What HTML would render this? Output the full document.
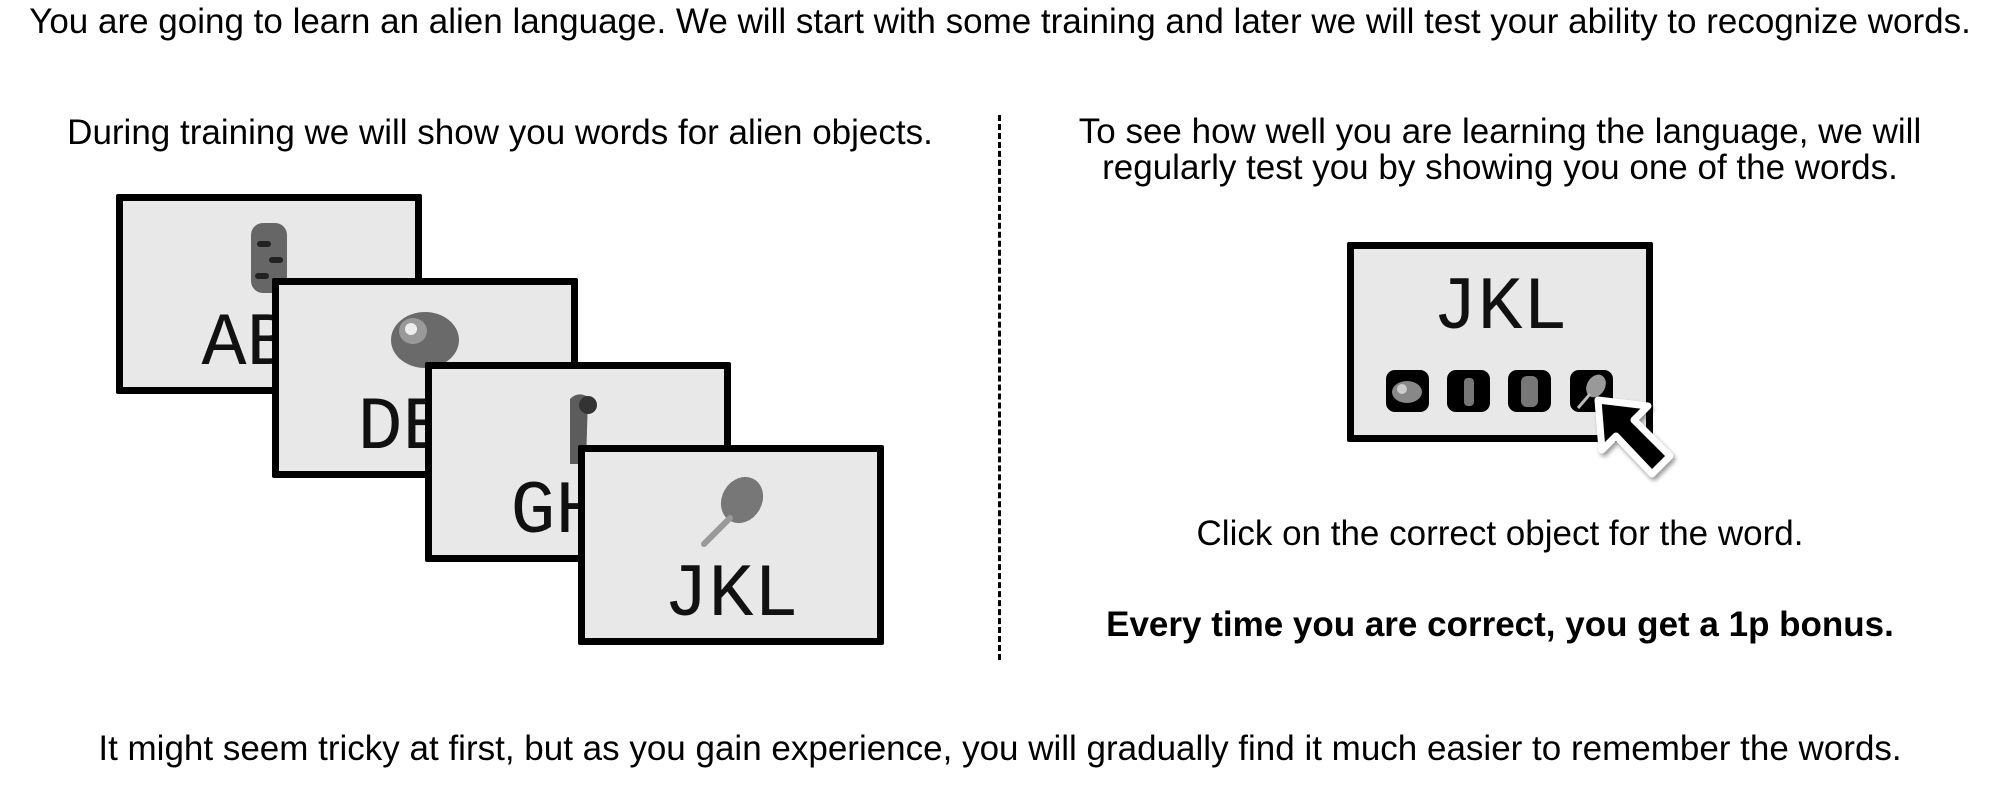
<!DOCTYPE html>
<html><head><meta charset="utf-8"><style>
html,body{margin:0;padding:0;background:#fff;}
body{width:2000px;height:800px;position:relative;overflow:hidden;font-family:"Liberation Sans",Arial,sans-serif;color:#000;}
.t{position:absolute;font-size:35px;white-space:nowrap;transform:translate(-50%,-50%);line-height:36px;text-align:center;}
.card{position:absolute;width:292px;height:186px;border:7px solid #000;background:#e8e8e8;border-radius:2px;}
.card .w{position:absolute;left:0;right:0;top:104px;text-align:center;font-family:"Liberation Mono",monospace;font-size:75px;line-height:80px;color:#111;}
.card .o{position:absolute;left:50%;top:20px;transform:translateX(-50%);}
.ic{position:absolute;top:370px;width:43px;height:42px;background:#000;border-radius:9px;}
</style></head><body>
<div class="t" style="left:1000px;top:22px;">You are going to learn an alien language. We will start with some training and later we will test your ability to recognize words.</div>
<div class="t" style="left:500px;top:133px;">During training we will show you words for alien objects.</div>
<div class="t" style="left:1500px;top:150px;">To see how well you are learning the language, we will<br>regularly test you by showing you one of the words.</div>

<div class="card" style="left:116px;top:194px;">
 <svg class="o" width="60" height="75" viewBox="0 0 60 75"><rect x="12" y="2" width="36" height="70" rx="12" fill="#666"/><rect x="18" y="20" width="14" height="6" rx="3" fill="#222"/><rect x="30" y="36" width="14" height="6" rx="3" fill="#222"/><rect x="16" y="52" width="14" height="6" rx="3" fill="#222"/></svg>
 <div class="w">ABC</div></div>
<div class="card" style="left:272px;top:278px;">
 <svg class="o" width="80" height="70" viewBox="0 0 80 70"><ellipse cx="40" cy="35" rx="34" ry="28" fill="#6a6a6a"/><ellipse cx="28" cy="26" rx="14" ry="13" fill="#999"/><circle cx="26" cy="24" r="6" fill="#eee"/></svg>
 <div class="w">DEF</div></div>
<div class="card" style="left:425px;top:362px;">
 <svg class="o" width="60" height="80" viewBox="0 0 60 80"><path d="M22 10 Q30 2 40 8 L38 75 L22 75 Z" fill="#5c5c5c"/><circle cx="40" cy="16" r="9" fill="#333"/></svg>
 <div class="w">GHI</div></div>
<div class="card" style="left:578px;top:445px;">
 <svg class="o" width="70" height="78" viewBox="0 0 70 78"><ellipse cx="46" cy="28" rx="20" ry="24" fill="#777" transform="rotate(30 46 28)"/><line x1="34" y1="46" x2="8" y2="72" stroke="#999" stroke-width="6" stroke-linecap="round"/></svg>
 <div class="w">JKL</div></div>

<div style="position:absolute;left:998px;top:115px;height:545px;border-left:3px dashed #000;"></div>

<div class="card" style="left:1347px;top:242px;">
 <div class="w" style="top:20px;">JKL</div></div>
<div class="ic" style="left:1386px;"><svg width="43" height="42"><ellipse cx="21" cy="22" rx="15" ry="11" fill="#888"/><circle cx="16" cy="19" r="5" fill="#ccc"/></svg></div>
<div class="ic" style="left:1447px;"><svg width="43" height="42"><rect x="17" y="8" width="10" height="28" rx="4" fill="#777"/></svg></div>
<div class="ic" style="left:1508px;"><svg width="43" height="42"><rect x="13" y="6" width="17" height="31" rx="6" fill="#777"/></svg></div>
<div class="ic" style="left:1570px;"><svg width="43" height="42"><ellipse cx="26" cy="16" rx="9" ry="12" fill="#999" transform="rotate(30 26 16)"/><line x1="20" y1="24" x2="8" y2="38" stroke="#bbb" stroke-width="3"/></svg></div>
<svg style="position:absolute;left:1590px;top:392px;" width="100" height="95" viewBox="0 0 100 95">
 <path d="M8 8 L12 58 L26 44 L62 82 L80 64 L44 28 L58 14 Z" fill="#000" stroke="#fff" stroke-width="7" stroke-linejoin="round" style="filter:drop-shadow(2px 3px 2px rgba(0,0,0,.4))"/>
</svg>

<div class="t" style="left:1500px;top:534px;">Click on the correct object for the word.</div>
<div class="t" style="left:1500px;top:625px;font-weight:bold;">Every time you are correct, you get a 1p bonus.</div>
<div class="t" style="left:1000px;top:749px;">It might seem tricky at first, but as you gain experience, you will gradually find it much easier to remember the words.</div>
</body></html>
